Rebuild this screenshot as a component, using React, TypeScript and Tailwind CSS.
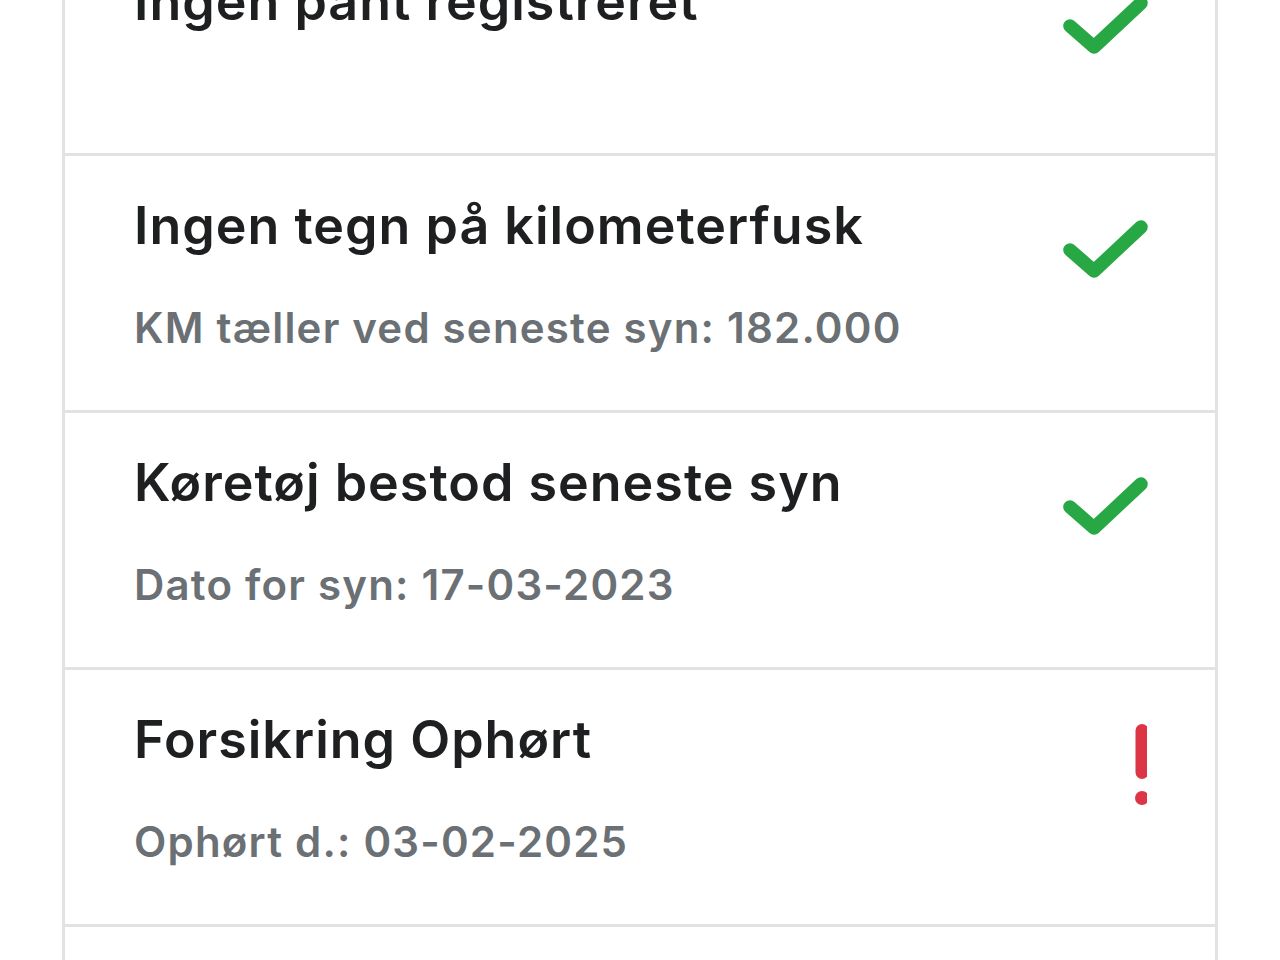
const rows = [
  { title: 'Ingen pant registreret', sub: '', status: 'ok' },
  { title: 'Ingen tegn på kilometerfusk', sub: 'KM tæller ved seneste syn: 182.000', status: 'ok' },
  { title: 'Køretøj bestod seneste syn', sub: 'Dato for syn: 17-03-2023', status: 'ok' },
  { title: 'Forsikring Ophørt', sub: 'Ophørt d.: 03-02-2025', status: 'warn' },
  { title: '', sub: '', status: '' },
];

const Check = () => (
  <svg width="90" height="70" viewBox="0 0 90 70" className="mt-[21px] shrink-0 overflow-visible">
    <path d="M13 34 L37 55 L84 11" fill="none" stroke="#28a745" strokeWidth="13.5" strokeLinecap="round" strokeLinejoin="round" />
  </svg>
);

const Warn = () => (
  <svg width="90" height="90" viewBox="0 0 90 90" className="mt-[11px] shrink-0">
    <line x1="85" y1="10.5" x2="85" y2="52.5" stroke="#dc3545" strokeWidth="13" strokeLinecap="round" />
    <circle cx="85" cy="78" r="7" fill="#dc3545" />
  </svg>
);

export default function App() {
  return (
    <div className="min-h-screen w-full overflow-hidden bg-white" style={{ fontFamily: 'Inter, "Noto Sans", sans-serif' }}>
      <div className="mx-[62px] -mt-[68px] border-x-[3px] border-[#e2e2e2]">
        {rows.map((r, i) => (
          <div
            key={i}
            className={`flex pl-[69px] pr-[68px] pt-[39px] ${i === 0 ? 'h-[224px]' : 'h-[257px]'} ${i < rows.length - 1 ? 'border-b-[3px] border-[#e2e2e2]' : ''}`}
          >
            <div className="flex-1">
              <div className="text-[52px] font-semibold leading-[62px] tracking-[1px] text-[#1d1f21]">{r.title}</div>
              {r.sub && (
                <div className="mt-[46px] text-[42px] font-semibold leading-[50px] tracking-[1.2px] text-[#6b7075]">{r.sub}</div>
              )}
            </div>
            {r.status === 'ok' && <Check />}
            {r.status === 'warn' && <Warn />}
          </div>
        ))}
      </div>
    </div>
  );
}
